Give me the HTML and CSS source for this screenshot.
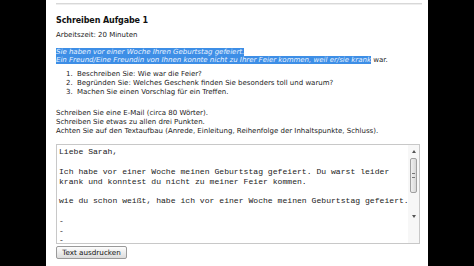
FILE: index.html
```html
<!DOCTYPE html>
<html lang="de">
<head>
<meta charset="utf-8">
<title>Schreiben Aufgabe 1</title>
<link rel="stylesheet" href="styles.css">
</head>
<body>
<div class="page">
  <div class="rule"></div>
  <h1 class="title">Schreiben Aufgabe 1</h1>
  <p class="time">Arbeitszeit: 20 Minuten</p>
  <p class="situation"><span class="sel">Sie haben vor einer Woche Ihren Geburtstag gefeiert.</span><br><span class="sel">Ein Freund/Eine Freundin von Ihnen konnte nicht zu Ihrer Feier kommen, weil er/sie krank</span> war.</p>
  <ol class="tasks">
    <li>Beschreiben Sie: Wie war die Feier?</li>
    <li>Begründen Sie: Welches Geschenk finden Sie besonders toll und warum?</li>
    <li>Machen Sie einen Vorschlag für ein Treffen.</li>
  </ol>
  <p class="hints">Schreiben Sie eine E-Mail (circa 80 Wörter).<br>Schreiben Sie etwas zu allen drei Punkten.<br>Achten Sie auf den Textaufbau (Anrede, Einleitung, Reihenfolge der Inhaltspunkte, Schluss).</p>
  <div class="editor">
    <div class="editor-text">Liebe Sarah,

Ich habe vor einer Woche meinen Geburtstag gefeiert. Du warst leider
krank und konntest du nicht zu meiner Feier kommen.

wie du schon weißt, habe ich vor einer Woche meinen Geburtstag gefeiert.

-
-
-</div>
    <div class="scrollbar">
      <div class="arrow up"></div>
      <div class="track"><div class="thumb"><span class="grip"></span></div></div>
      <div class="arrow down"></div>
      <div class="corner"></div>
    </div>
  </div>
  <button class="print" type="button">Text ausdrucken</button>
</div>
</body>
</html>
```

FILE: styles.css
```css
html, body {
  margin: 0;
  padding: 0;
  background: #000;
  height: 100%;
  overflow: hidden;
}

.page {
  margin-left: 46px;
  width: 382px;
  height: 266px;
  background: #fff;
  box-sizing: border-box;
  padding: 3px 6px 0 10px;
  font-family: "DejaVu Sans", Verdana, sans-serif;
  font-size: 7px;
  color: #222;
}

.rule {
  height: 1px;
  background: #d8d8d8;
  box-shadow: 0 1px 0 #eee;
  margin-bottom: 11px;
}

.title {
  margin: 0;
  font-size: 8px;
  letter-spacing: -0.1px;
  font-weight: bold;
  line-height: 11px;
  color: #111;
}

.time {
  margin: 4px 0 0;
  line-height: 10px;
}

.situation {
  margin: 8px 0 0;
  line-height: 8px;
}

.sel {
  background: #3d8ee6;
  color: #e8f2ff;
  font-style: italic;
}

.tasks {
  margin: 6px 0 0;
  padding-left: 19px;
  line-height: 8.8px;
}

.tasks li {
  padding-left: 2px;
}

.hints {
  margin: 13px 0 0;
  line-height: 8.6px;
}

.editor {
  margin-top: 9px;
  width: 364px;
  height: 100px;
  box-sizing: border-box;
  border: 1px solid #c8c8c8;
  display: flex;
  background: #fff;
}

.editor-text {
  flex: 1;
  white-space: pre;
  font-family: "Liberation Mono", "Courier New", monospace;
  font-size: 8.1px;
  line-height: 9.8px;
  padding: 2px 0 0 2px;
  color: #222;
  overflow: hidden;
}

.scrollbar {
  width: 11px;
  display: flex;
  flex-direction: column;
  align-items: center;
  background: #f7f7f7;
}

.arrow {
  width: 0;
  height: 0;
  margin: 5px 0 4px;
  border-left: 2px solid transparent;
  border-right: 2px solid transparent;
}

.arrow.up {
  border-bottom: 3px solid #555;
}

.arrow.down {
  border-top: 3px solid #555;
  margin: 22px 0 4px;
}

.track {
  width: 100%;
  display: flex;
  justify-content: center;
  padding-top: 1px;
}

.thumb {
  width: 7px;
  height: 35px;
  box-sizing: border-box;
  border: 1px solid #a0a0a0;
  border-radius: 2px;
  background: linear-gradient(to right, #f0f0f0, #d8d8d8);
  display: flex;
  align-items: center;
  justify-content: center;
}

.grip {
  width: 3px;
  height: 3px;
  border-top: 1px solid #777;
  border-bottom: 1px solid #777;
}

.corner {
  height: 8px;
  width: 100%;
}

.print {
  margin-top: 2px;
  height: 13px;
  width: 71px;
  padding: 0;
  font-family: "DejaVu Sans", Verdana, sans-serif;
  font-size: 7.2px;
  color: #111;
  border: 1px solid #9a9a9a;
  border-radius: 2px;
  background: linear-gradient(#fdfdfd, #dcdcdc);
}
```
